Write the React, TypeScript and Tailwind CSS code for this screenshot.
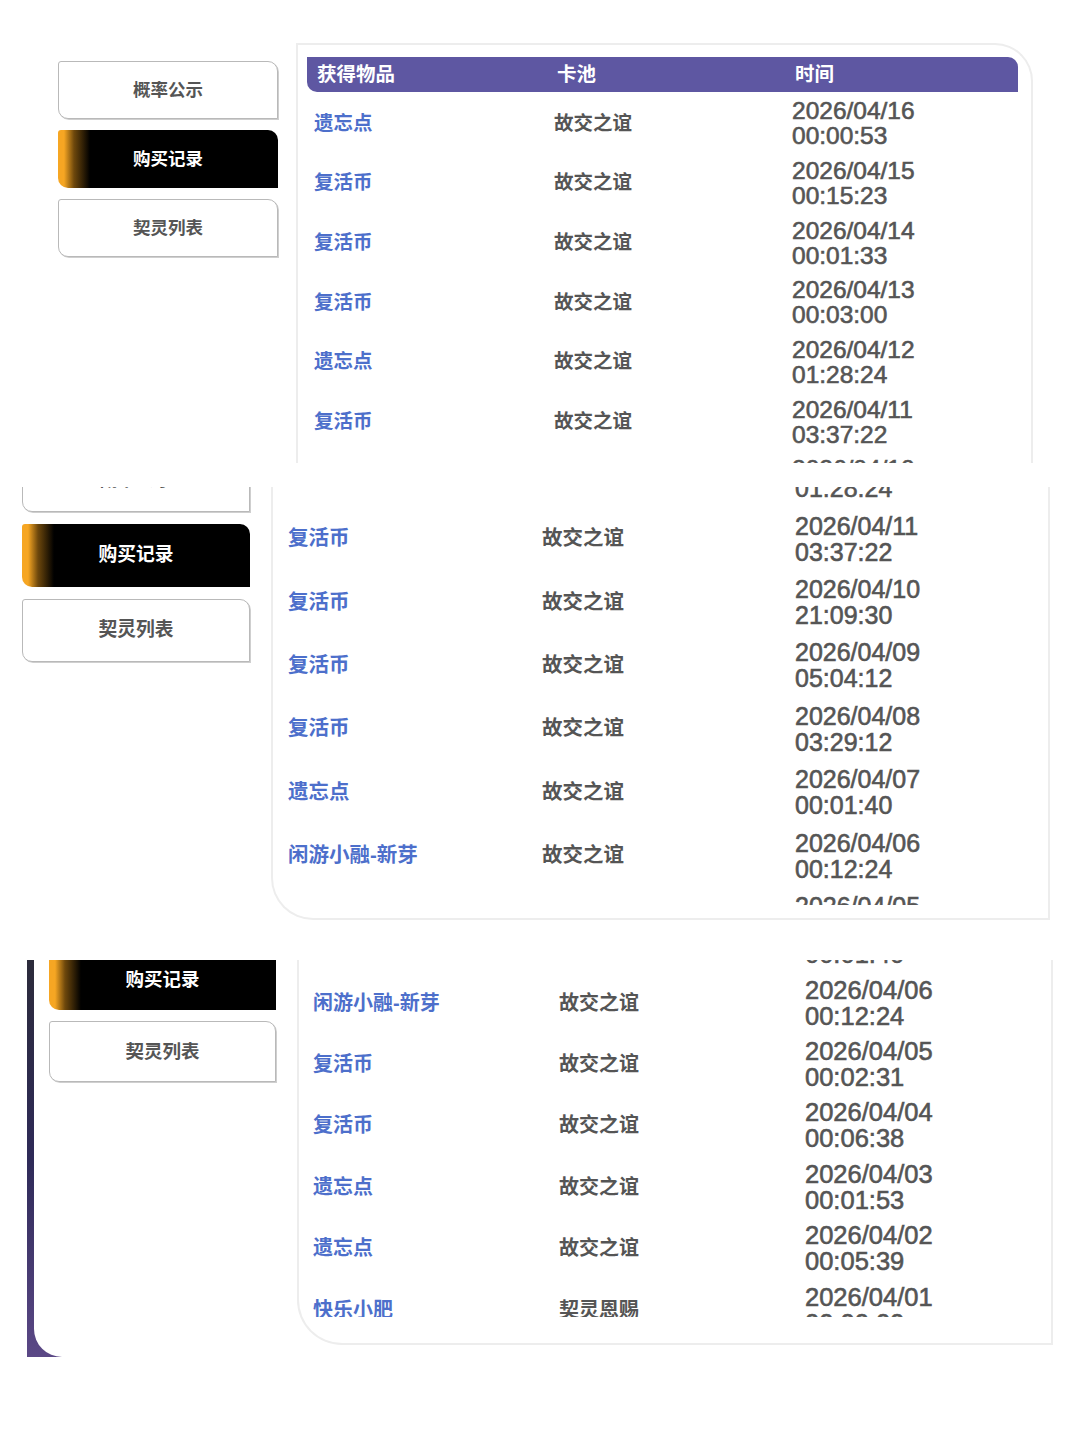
import React from "react";

// ---------------------------------------------------------------------------
// Data
// ---------------------------------------------------------------------------

type Rec = { item: string; pool: string; date: string; time: string };

const RECORDS: Rec[] = [
  { item: "遗忘点", pool: "故交之谊", date: "2026/04/16", time: "00:00:53" },
  { item: "复活币", pool: "故交之谊", date: "2026/04/15", time: "00:15:23" },
  { item: "复活币", pool: "故交之谊", date: "2026/04/14", time: "00:01:33" },
  { item: "复活币", pool: "故交之谊", date: "2026/04/13", time: "00:03:00" },
  { item: "遗忘点", pool: "故交之谊", date: "2026/04/12", time: "01:28:24" },
  { item: "复活币", pool: "故交之谊", date: "2026/04/11", time: "03:37:22" },
  { item: "复活币", pool: "故交之谊", date: "2026/04/10", time: "21:09:30" },
  { item: "复活币", pool: "故交之谊", date: "2026/04/09", time: "05:04:12" },
  { item: "复活币", pool: "故交之谊", date: "2026/04/08", time: "03:29:12" },
  { item: "遗忘点", pool: "故交之谊", date: "2026/04/07", time: "00:01:40" },
  { item: "闲游小融-新芽", pool: "故交之谊", date: "2026/04/06", time: "00:12:24" },
  { item: "复活币", pool: "故交之谊", date: "2026/04/05", time: "00:02:31" },
  { item: "复活币", pool: "故交之谊", date: "2026/04/04", time: "00:06:38" },
  { item: "遗忘点", pool: "故交之谊", date: "2026/04/03", time: "00:01:53" },
  { item: "遗忘点", pool: "故交之谊", date: "2026/04/02", time: "00:05:39" },
  { item: "快乐小肥", pool: "契灵恩赐", date: "2026/04/01", time: "00:00:00" },
];

const TABS = ["概率公示", "购买记录", "契灵列表"];

// ---------------------------------------------------------------------------
// Pieces
// ---------------------------------------------------------------------------

function SideButton({ label, active, sizeClass }: { label: string; active: boolean; sizeClass: string }) {
  return (
    <div
      className={
        "flex items-center justify-center font-bold rounded-tl-[3px] rounded-tr-[10px] rounded-bl-[10px] " +
        sizeClass +
        (active
          ? " text-white bg-[linear-gradient(90deg,#f6a623_0px,#f6a623_6px,#6e480c_16px,#000_32px)]"
          : " bg-white text-[#555] border border-[#b9b9b9] shadow-[1px_1px_0_#cfcfcf]")
      }
    >
      {label}
    </div>
  );
}

function RecordRow({
  rec,
  rowClass,
  nameClass,
  dateClass,
}: {
  rec: Rec;
  rowClass: string;
  nameClass: string;
  dateClass: string;
}) {
  return (
    <div className={"grid items-center " + rowClass}>
      <div className={"font-bold text-[#4d6fcb] whitespace-nowrap " + nameClass}>{rec.item}</div>
      <div className={"font-bold text-[#555] whitespace-nowrap " + nameClass}>{rec.pool}</div>
      <div className={"font-normal text-[#555] [-webkit-text-stroke:0.6px_#555] " + dateClass}>
        <div>{rec.date}</div>
        <div>{rec.time}</div>
      </div>
    </div>
  );
}

// ---------------------------------------------------------------------------
// Page
// ---------------------------------------------------------------------------

export default function App() {
  return (
    <div className="w-[1080px] min-h-[1440px] bg-white font-['Liberation_Sans','Noto_Sans_CJK_SC',sans-serif]">
      {/* Shot 1 */}
      <section className="h-[463px] overflow-hidden flex items-start">
        <nav className="ml-[58px] mt-[61px] w-[220px] flex flex-col gap-[11px]">
          {TABS.map((t) => (
            <SideButton key={t} label={t} active={t === "购买记录"} sizeClass="h-[58px] text-[17.5px]" />
          ))}
        </nav>
        <div className="ml-[18px] mt-[43px] w-[737px] border-2 border-b-0 border-[#ededed] rounded-tr-[38px] pt-[12px] pl-[9px] pr-[13px]">
          <div className="grid grid-cols-[240px_238px_1fr] items-center h-[35px] pl-[10px] bg-[#5e57a2] rounded-tr-[10px] rounded-bl-[10px] text-white font-bold text-[19.5px]">
            <div>获得物品</div>
            <div>卡池</div>
            <div>时间</div>
          </div>
          {RECORDS.slice(0, 7).map((r) => (
            <RecordRow
              key={r.date}
              rec={r}
              rowClass="grid-cols-[240px_238px_1fr] h-[59.7px] pl-[7px] pt-[3px]"
              nameClass="text-[19.5px]"
              dateClass="text-[24.5px] leading-[25px]"
            />
          ))}
        </div>
      </section>

      {/* Shot 2 */}
      <section className="mt-[24px] h-[434px] overflow-hidden flex items-start">
        <nav className="ml-[22px] mt-[-38px] w-[228px] flex flex-col gap-[12px]">
          {TABS.map((t) => (
            <SideButton key={t} label={t} active={t === "购买记录"} sizeClass="h-[63px] text-[18.75px]" />
          ))}
        </nav>
        <div className="ml-[21px] w-[779px] h-[433px] border-2 border-t-0 border-[#ededed] rounded-bl-[42px] pb-[13px] flex flex-col">
          <div className="flex-1 overflow-hidden">
            <div className="mt-[-45px]">
              {RECORDS.slice(4, 12).map((r) => (
                <RecordRow
                  key={r.date}
                  rec={r}
                  rowClass="grid-cols-[254px_253px_1fr] h-[63.4px] pl-[15px] pt-[3px]"
                  nameClass="text-[20.5px]"
                  dateClass="text-[25px] leading-[26px]"
                />
              ))}
            </div>
          </div>
        </div>
      </section>

      {/* Shot 3 */}
      <section className="mt-[39px] h-[397px] overflow-hidden flex">
        <div className="ml-[27px] flex-1 flex pl-[7px] bg-[linear-gradient(180deg,#2c2b3b_0%,#2e2a58_50%,#5b4886_100%)]">
          <div className="flex-1 flex items-start bg-white rounded-bl-[28px] overflow-hidden">
            <nav className="ml-[15px] mt-[-83px] w-[227px] flex flex-col gap-[11px]">
              {TABS.map((t) => (
                <SideButton key={t} label={t} active={t === "购买记录"} sizeClass="h-[61px] text-[18.5px]" />
              ))}
            </nav>
            <div className="ml-[21px] w-[756px] h-[385px] border-2 border-t-0 border-[#ededed] rounded-bl-[45px] pb-[26px] flex flex-col">
              <div className="flex-1 overflow-hidden">
                <div className="mt-[-50.4px]">
                  {RECORDS.slice(9, 16).map((r) => (
                    <RecordRow
                      key={r.date}
                      rec={r}
                      rowClass="grid-cols-[246px_246px_1fr] h-[61.4px] pl-[14px] pt-[2px]"
                      nameClass="text-[20px]"
                      dateClass="text-[25.5px] leading-[26px]"
                    />
                  ))}
                </div>
              </div>
            </div>
          </div>
        </div>
      </section>
    </div>
  );
}
